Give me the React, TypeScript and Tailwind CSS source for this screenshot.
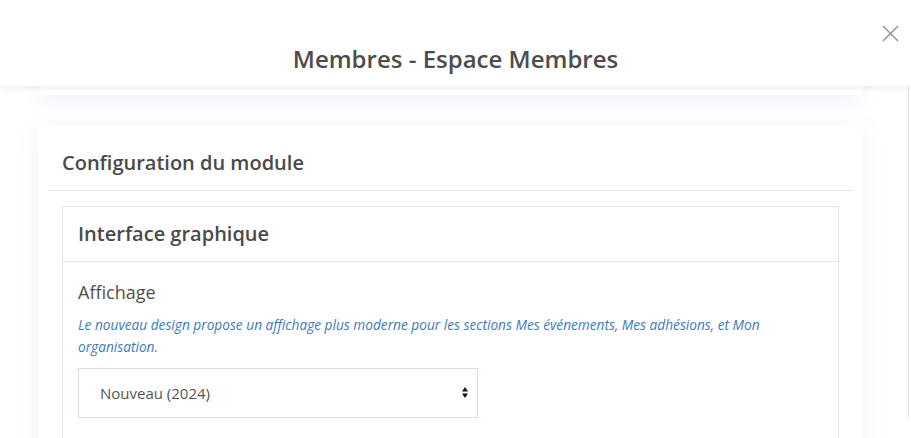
import { useState } from "react";

export default function App() {
  const [mode, setMode] = useState("2024");

  return (
    <div className="h-[438px] overflow-hidden bg-white font-['Open_Sans',sans-serif] text-[#4a4a4a]">
      {/* modal header */}
      <div className="relative z-10 h-[86px] bg-white shadow-[0_2px_6px_rgba(0,0,0,0.08)]">
        <h2 className="pt-[44px] text-center text-[24px] font-semibold leading-[30px] text-[#4d4d4d]">
          Membres - Espace Membres
        </h2>
        <button className="absolute right-[12px] top-[25px] p-0 text-[#8a8a8a]">
          <svg width="17" height="17" viewBox="0 0 17 17" fill="none" stroke="currentColor" strokeWidth="1.3">
            <path d="M1 1L16 16M16 1L1 16" />
          </svg>
        </button>
      </div>

      <div className="h-[352px] w-[909px] border-r border-[#e2e2e2]">
        <div className="ml-[38px] w-[825px]">
          {/* previous card, scrolled under the header */}
          <div className="-mt-[20px] h-[29px] rounded-[4px] bg-white shadow-[0_6px_18px_rgba(90,120,220,0.09)]" />

          <div className="mt-[30px] rounded-[4px] bg-white px-[10px] pb-[20px] shadow-[0_4px_24px_rgba(90,120,220,0.09)]">
            <div className="border-b border-[#e3e3e3] px-[14px] pb-[13px] pt-[24px]">
              <h3 className="text-[20px] font-semibold leading-[28px]">Configuration du module</h3>
            </div>

            <div className="mx-[14px] mt-[15px] border border-[#e3e3e3]">
              <div className="border-b border-[#e3e3e3] px-[15px] py-[13px]">
                <h4 className="text-[20px] font-semibold leading-[28px]">Interface graphique</h4>
              </div>
              <div className="px-[15px] pb-[30px] pt-[18px]">
                <label className="block text-[18px] leading-[24px] text-[#4f4f4f]">Affichage</label>
                <p className="mt-[10px] text-[13.7px] italic leading-[22px] text-[#3b7bbf]">
                  Le nouveau design propose un affichage plus moderne pour les sections Mes événements, Mes adhésions, et Mon organisation.
                </p>
                <div className="relative mt-[10px] w-[400px]">
                  <select
                    value={mode}
                    onChange={(e) => setMode(e.target.value)}
                    className="h-[50px] w-full appearance-none rounded-none border border-[#d6dfeb] bg-white pl-[21px] text-[15px] text-[#555] outline-none"
                  >
                    <option value="2024">Nouveau (2024)</option>
                    <option value="old">Ancien</option>
                  </select>
                  <svg className="pointer-events-none absolute right-[9px] top-[18px]" width="8" height="13" viewBox="0 0 8 13" fill="#111">
                    <path d="M4 1L7 5.5H1Z" />
                    <path d="M4 12L1 7.5H7Z" />
                  </svg>
                </div>
              </div>
            </div>
          </div>
        </div>
      </div>
    </div>
  );
}
